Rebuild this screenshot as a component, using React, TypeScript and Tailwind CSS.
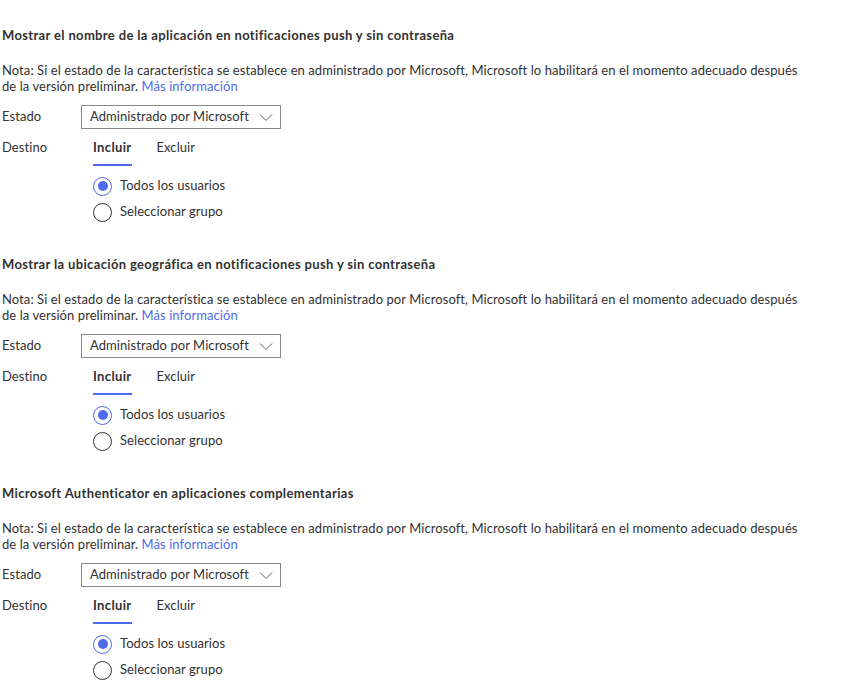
import { ChevronDown } from 'lucide-react'

const sections = [
  'Mostrar el nombre de la aplicación en notificaciones push y sin contraseña',
  'Mostrar la ubicación geográfica en notificaciones push y sin contraseña',
  'Microsoft Authenticator en aplicaciones complementarias',
]

function Radio({ checked, label }: { checked?: boolean; label: string }) {
  return (
    <label className="flex items-center gap-2 h-[26px]">
      <span
        className={
          'w-[19px] h-[19px] rounded-full border flex items-center justify-center ' +
          (checked ? 'border-[#4f6bed]' : 'border-[#323130]')
        }
      >
        {checked && <span className="w-[10px] h-[10px] rounded-full bg-[#4f6bed]" />}
      </span>
      <span>{label}</span>
    </label>
  )
}

function Section({ title }: { title: string }) {
  return (
    <section className="pt-[26px] pb-[4px]">
      <h2 className="font-bold leading-[18px] tracking-[0.35px]">{title}</h2>

      <p className="mt-[18px] leading-[16px] whitespace-nowrap">
        Nota: Si el estado de la característica se establece en administrado por Microsoft, Microsoft lo habilitará en el momento adecuado después
        <br />
        de la versión preliminar. <a className="text-[#4f6bed]">Más información</a>
      </p>

      {/* Estado */}
      <div className="flex items-center mt-[11px]">
        <span className="w-[79px]">Estado</span>
        <button className="w-[200px] h-[24px] border border-[#8a8886] flex items-center justify-between pl-[8px] pr-[6px] bg-white whitespace-nowrap">
          <span>Administrado por Microsoft</span>
          <svg width="16" height="16" viewBox="0 0 16 16" fill="none" className="text-[#605e5c]">
            <path d="M2 5.5l6 6 6-6" stroke="currentColor" strokeWidth="1" />
          </svg>
        </button>
      </div>

      {/* Destino */}
      <div className="flex mt-[5px]">
        <span className="w-[91px] leading-[26px]">Destino</span>
        <div>
          <div className="flex gap-[25px]">
            <div className="font-bold leading-[26px] tracking-[0.35px] border-b-2 border-[#4f6bed] pb-[4px]">Incluir</div>
            <div className="leading-[26px]">Excluir</div>
          </div>
          <div className="mt-[7px] flex flex-col">
            <Radio checked label="Todos los usuarios" />
            <Radio label="Seleccionar grupo" />
          </div>
        </div>
      </div>
    </section>
  )
}

export default function App() {
  return (
    <div className="w-[856px] h-[692px] bg-white text-[#323130] text-[13px] tracking-[0.07px] pl-[2px] overflow-hidden" style={{ fontFamily: 'Lato, "Noto Sans", sans-serif' }}>
      {sections.map((s) => (
        <Section key={s} title={s} />
      ))}
    </div>
  )
}
